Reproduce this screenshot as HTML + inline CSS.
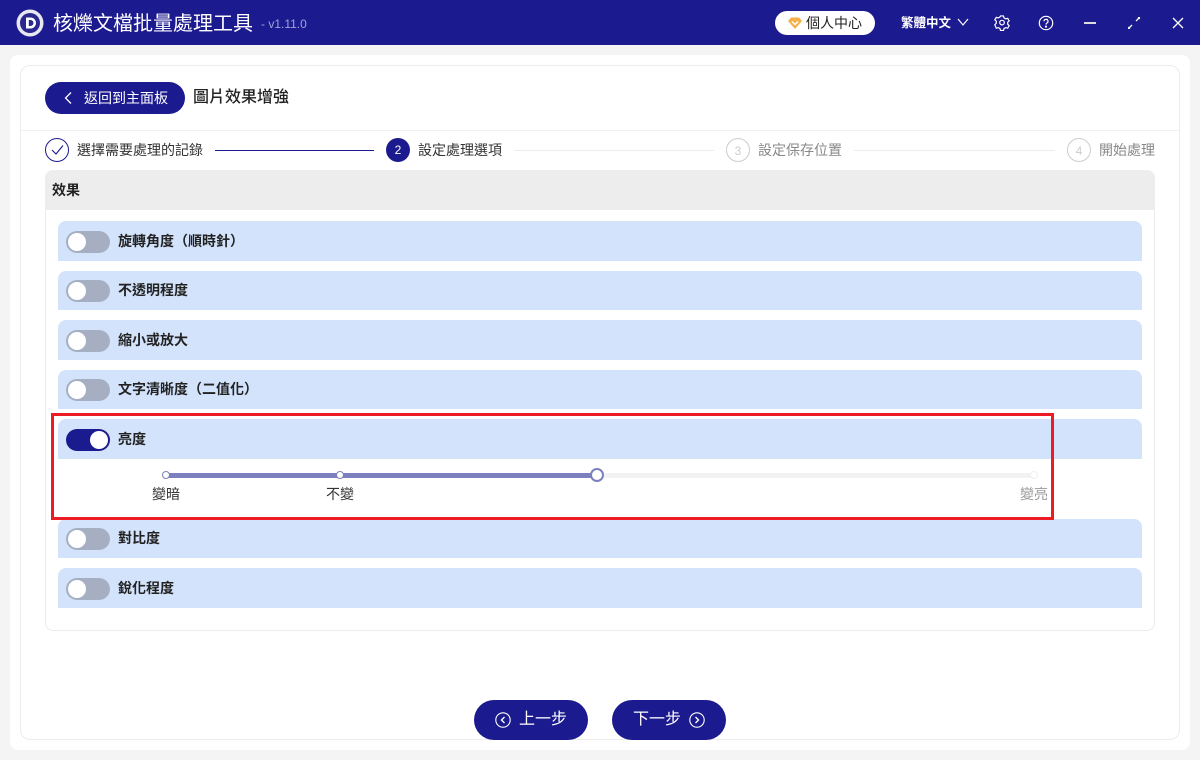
<!DOCTYPE html>
<html><head><meta charset="utf-8">
<style>
*{box-sizing:border-box;margin:0;padding:0}
html,body{width:1200px;height:760px;overflow:hidden;background:#f4f4f4;font-family:"Liberation Sans","Noto Sans CJK TC",sans-serif;color:#222}
.a{position:absolute}
.t{position:absolute;white-space:nowrap;line-height:20px}
.row{position:absolute;left:58px;width:1084px;background:#d3e3fb;border-radius:8px 8px 0 0}
.tg{position:absolute;left:66px;width:44px;height:22px;border-radius:11px;background:#a5afc1}
.tg:after{content:"";position:absolute;left:2px;top:2px;width:18px;height:18px;border-radius:50%;background:#fff}
.tg.on{background:#1c1a8f}
.tg.on:after{left:24px}
.rl{position:absolute;left:118px;font-size:14px;font-weight:700;line-height:20px;white-space:nowrap;color:#222}
.c{position:absolute;top:138px;width:24px;height:24px;border-radius:50%;text-align:center;line-height:25px;font-size:12px}
.sl{position:absolute;top:140px;font-size:14px;line-height:20px;white-space:nowrap}
.ln{position:absolute;top:150px;height:1px;background:#ececec}
.d{position:absolute;top:471px;width:8px;height:8px;border-radius:50%;background:#fff;border:1.500px solid #7d80bf}
</style></head><body>
<div class="a" style="left:0;top:0;width:1200px;height:45px;background:#1c1a8f"></div>
<svg class="a" style="left:16px;top:9px" width="28" height="28" viewBox="0 0 28 28"><circle cx="14" cy="14" r="13.500" fill="#e8e8f2"/><circle cx="14" cy="14" r="10" fill="#2a2890"/><path d="M10 8.500h4.500a5.500 5.500 0 0 1 0 11H10z M12.800 11v6h1.700a3 3 0 0 0 0-6z" fill="#fff" fill-rule="evenodd"/></svg>
<div class="t" style="left:53px;top:12px;font-size:20px;line-height:24px;color:#fff">核爍文檔批量處理工具</div>
<div class="t" style="left:261px;top:14px;font-size:12px;color:#a3a3d6">- v1.11.0</div>
<div class="a" style="left:775px;top:11px;width:100px;height:24px;border-radius:12px;background:#fff"></div>
<svg class="a" style="left:788px;top:17px" width="14" height="12" viewBox="0 0 14 12"><path d="M3 .5h8L14 4 7 12 0 4z" fill="#f5b04a"/><path d="M4 4.500 7 7.500 10 4.500" fill="none" stroke="#fff" stroke-width="1.500"/></svg>
<div class="t" style="left:806px;top:13px;font-size:14px;color:#222">個人中心</div>
<div class="t" style="left:901px;top:13px;font-size:12.500px;font-weight:700;color:#fff">繁體中文</div>
<svg class="a" style="left:957px;top:17px" width="12" height="10" viewBox="0 0 12 10"><path d="M1 2 6 8 11 2" fill="none" stroke="#fff" stroke-width="1.200"/></svg>
<svg class="a" style="left:994px;top:15px" width="16" height="16" viewBox="0 0 16 16" fill="none" stroke="#fff" stroke-width="1.200"><path d="M6.500 1.500h3l.5 2 1.700 1 2-.6 1.500 2.600-1.500 1.500v2l1.500 1.500-1.500 2.600-2-.6-1.700 1-.5 2h-3l-.5-2-1.700-1-2 .6L.8 10.500l1.500-1.500V7L.8 5.500l1.500-2.600 2 .6 1.700-1z" transform="translate(0 -.5) scale(1 .97)"/><circle cx="8" cy="7.600" r="2.300"/></svg>
<svg class="a" style="left:1038px;top:15px" width="16" height="16" viewBox="0 0 16 16" fill="none" stroke="#fff" stroke-width="1.200"><circle cx="8" cy="8" r="6.700"/><path d="M6 6.300a2 2 0 1 1 3 1.700c-.7.400-1 .8-1 1.600"/><circle cx="8" cy="11.600" r=".5" fill="#fff"/></svg>
<div class="a" style="left:1084px;top:22px;width:12px;height:1.500px;background:#ddd"></div>
<svg class="a" style="left:1127px;top:16px" width="14" height="14" viewBox="0 0 14 14"><path d="M2 12 5 9M9 5l3-3" stroke="#fff" stroke-width="1.300"/><path d="M1 13V10.500L3.500 13zM13 1v2.500L10.500 1z" fill="#fff"/></svg>
<svg class="a" style="left:1172px;top:17px" width="12" height="12" viewBox="0 0 12 12"><path d="M1 1l10 10M11 1 1 11" stroke="#fff" stroke-width="1.300"/></svg>

<div class="a" style="left:10px;top:55px;width:1180px;height:695px;background:#fff;border-radius:8px"></div>
<div class="a" style="left:20px;top:65px;width:1160px;height:675px;border:1px solid #ececec;border-radius:10px"></div>
<div class="a" style="left:21px;top:130px;width:1158px;height:1px;background:#f0f0f0"></div>

<div class="a" style="left:45px;top:82px;width:140px;height:32px;border-radius:16px;background:#1c1a8f"></div>
<svg class="a" style="left:62px;top:91px" width="12" height="14" viewBox="0 0 12 14"><path d="M9 1.500 3.500 7 9 12.500" fill="none" stroke="#fff" stroke-width="1.300"/></svg>
<div class="t" style="left:84px;top:88px;font-size:14px;color:#fff">返回到主面板</div>
<div class="t" style="left:193px;top:88px;font-size:16px;font-weight:500;color:#222">圖片效果增強</div>

<div class="c" style="left:45px;border:1px solid #1c1a8f"></div>
<svg class="a" style="left:51px;top:144px" width="13" height="12" viewBox="0 0 13 12"><path d="M1 6l4 4 7-8.500" fill="none" stroke="#1c1a8f" stroke-width="1.100"/></svg>
<div class="sl" style="left:77px;color:#333">選擇需要處理的記錄</div>
<div class="a" style="left:215px;top:150px;width:159px;height:1px;background:#1c1a8f"></div>
<div class="c" style="left:386px;background:#1c1a8f;color:#fff">2</div>
<div class="sl" style="left:418px;color:#333">設定處理選項</div>
<div class="ln" style="left:514px;width:200px"></div>
<div class="c" style="left:726px;border:1px solid #ccc;color:#ccc">3</div>
<div class="sl" style="left:758px;color:#888">設定保存位置</div>
<div class="ln" style="left:854px;width:201px"></div>
<div class="c" style="left:1067px;border:1px solid #ccc;color:#ccc">4</div>
<div class="sl" style="left:1099px;color:#888">開始處理</div>

<div class="a" style="left:45px;top:170px;width:1110px;height:461px;border:1px solid #ececec;border-radius:8px"></div>
<div class="a" style="left:45px;top:170px;width:1110px;height:40px;background:#ededed;border-radius:8px 8px 0 0"></div>
<div class="t" style="left:52px;top:180px;font-size:14px;font-weight:700;color:#222">效果</div>

<div class="row" style="top:221px;height:40px"></div><div class="tg" style="top:231px"></div><div class="rl" style="top:231px">旋轉角度（順時針）</div>
<div class="row" style="top:271px;height:39px"></div><div class="tg" style="top:280px"></div><div class="rl" style="top:280px">不透明程度</div>
<div class="row" style="top:320px;height:40px"></div><div class="tg" style="top:330px"></div><div class="rl" style="top:330px">縮小或放大</div>
<div class="row" style="top:370px;height:39px"></div><div class="tg" style="top:379px"></div><div class="rl" style="top:379px">文字清晰度（二值化）</div>
<div class="row" style="top:419px;height:40px"></div><div class="tg on" style="top:429px"></div><div class="rl" style="top:429px">亮度</div>
<div class="row" style="top:519px;height:39px"></div><div class="tg" style="top:528px"></div><div class="rl" style="top:528px">對比度</div>
<div class="row" style="top:568px;height:40px"></div><div class="tg" style="top:578px"></div><div class="rl" style="top:578px">銳化程度</div>

<div class="a" style="left:166px;top:472.500px;width:868px;height:5px;background:#f2f2f2;border-radius:3px"></div>
<div class="a" style="left:166px;top:472.500px;width:431px;height:5px;background:#7d80bf;border-radius:3px"></div>
<div class="d" style="left:162px"></div>
<div class="d" style="left:336px"></div>
<div class="a" style="left:590px;top:468px;width:14px;height:14px;border-radius:50%;background:#fff;border:2px solid #7d80bf"></div>
<div class="d" style="left:1030px;border-color:#f0f0f0"></div>
<div class="t" style="left:152px;top:484px;font-size:14px;color:#333">變暗</div>
<div class="t" style="left:326px;top:484px;font-size:14px;color:#333">不變</div>
<div class="t" style="left:1020px;top:484px;font-size:14px;color:#999">變亮</div>

<div class="a" style="left:51px;top:413px;width:1003px;height:107px;border:3px solid #ed1c24"></div>

<div class="a" style="left:474px;top:700px;width:114px;height:40px;border-radius:20px;background:#1c1a8f"></div>
<svg class="a" style="left:495px;top:712px" width="16" height="16" viewBox="0 0 16 16" fill="none" stroke="#fff"><circle cx="8" cy="8" r="7.200" stroke-width="1.100"/><path d="M9.500 5 6.500 8l3 3" stroke-width="1.400"/></svg>
<div class="t" style="left:519px;top:710px;font-size:16px;color:#fff">上一步</div>
<div class="a" style="left:612px;top:700px;width:114px;height:40px;border-radius:20px;background:#1c1a8f"></div>
<div class="t" style="left:633px;top:710px;font-size:16px;color:#fff">下一步</div>
<svg class="a" style="left:689px;top:712px" width="16" height="16" viewBox="0 0 16 16" fill="none" stroke="#fff"><circle cx="8" cy="8" r="7.200" stroke-width="1.100"/><path d="M6.500 5l3 3-3 3" stroke-width="1.400"/></svg>
</body></html>
